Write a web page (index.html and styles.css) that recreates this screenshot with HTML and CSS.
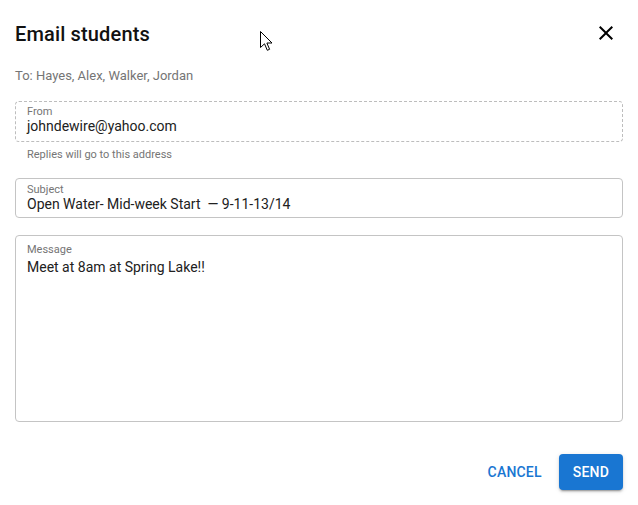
FILE: index.html
```html
<!DOCTYPE html>
<html lang="en">
<head>
  <meta charset="UTF-8" />
  <title>Email students</title>
  <link rel="stylesheet" href="styles.css">
</head>
<body>
  <div class="dialog">

    <!-- header -->
    <div class="header">
      <h2 class="title">Email students</h2>
      <button class="close-btn" aria-label="Close">
        <svg width="24" height="24" viewBox="0 0 24 24"><path d="M19 6.41L17.59 5 12 10.59 6.41 5 5 6.41 10.59 12 5 17.59 6.41 19 12 13.41 17.59 19 19 17.59 13.41 12z" fill="#000"/></svg>
      </button>
    </div>

    <p class="to-line">To: Hayes, Alex, Walker, Jordan</p>

    <!-- from -->
    <div class="field field-disabled">
      <label class="field-label">From</label>
      <div class="field-value">johndewire@yahoo.com</div>
    </div>
    <p class="helper">Replies will go to this address</p>

    <!-- subject -->
    <div class="field field-subject">
      <label class="field-label">Subject</label>
      <div class="field-value">Open Water- Mid-week Start &nbsp;— 9-11-13/14</div>
    </div>

    <!-- message -->
    <div class="field field-message">
      <label class="field-label">Message</label>
      <div class="field-value">Meet at 8am at Spring Lake!!</div>
    </div>

    <div class="actions">
      <button class="btn btn-text">Cancel</button>
      <button class="btn btn-primary">Send</button>
    </div>
  </div>

  <svg class="cursor" width="14" height="21" viewBox="0 0 14 21">
    <path d="M0.5 0.5 L0.5 16.5 L4.5 12.8 L7.3 19.3 L9.6 18.3 L6.9 12 L12 12 Z" fill="#fff" stroke="#000" stroke-width="1" stroke-linejoin="round"/>
  </svg>
</body>
</html>
```

FILE: styles.css
```css
body {
  margin: 0;
  background: #fff;
  font-family: Roboto, "Liberation Sans", sans-serif;
  color: #212121;
}

.dialog {
  padding: 18px 15px 15px;
}

.header {
  display: flex;
  align-items: center;
  justify-content: space-between;
  height: 32px;
}

.title {
  margin: 0;
  font-size: 20px;
  font-weight: 500;
  line-height: 32px;
  letter-spacing: 0.15px;
  color: #111;
}

.close-btn {
  border: none;
  background: none;
  padding: 0;
  margin-right: 5px;
  margin-top: -3px;
  width: 24px;
  height: 24px;
  display: flex;
}

.to-line {
  margin: 18px 0 0;
  font-size: 13px;
  line-height: 16px;
  color: #757575;
}

.field {
  border: 1px solid #c4c4c4;
  border-radius: 4px;
  padding: 4px 11px 7px;
}

.field-disabled {
  margin-top: 17px;
  border: 1px dashed #bdbdbd;
}

.field-subject {
  margin-top: 17px;
  padding-top: 5px;
  padding-bottom: 5px;
}

.field-message {
  margin-top: 17px;
  height: 174px;
  padding-top: 8px;
  padding-bottom: 3px;
}

.field-label {
  display: block;
  font-size: 11px;
  line-height: 12px;
  color: #757575;
}

.field-value {
  font-size: 14px;
  line-height: 16px;
  color: #212121;
}

.field-message .field-value {
  margin-top: 1px;
  line-height: 20px;
}

.helper {
  margin: 6px 0 0 12px;
  font-size: 11px;
  line-height: 13px;
  color: #757575;
}

.actions {
  display: flex;
  justify-content: flex-end;
  align-items: center;
  gap: 9px;
  margin-top: 32px;
}

.btn {
  font-family: Roboto, "Liberation Sans", sans-serif;
  font-size: 14px;
  font-weight: 500;
  text-transform: uppercase;
  height: 36px;
  border: none;
  border-radius: 4px;
  padding: 0 14px;
  background: none;
  letter-spacing: 0.2px;
}

.btn-text {
  color: #1976d2;
  padding: 0 8px;
}

.btn-primary {
  background: #1976d2;
  color: #fff;
  box-shadow: 0 3px 1px -2px rgba(0,0,0,0.2), 0 2px 2px 0 rgba(0,0,0,0.14), 0 1px 5px 0 rgba(0,0,0,0.12);
}

.cursor {
  position: absolute;
  left: 260px;
  top: 31px;
}
```
